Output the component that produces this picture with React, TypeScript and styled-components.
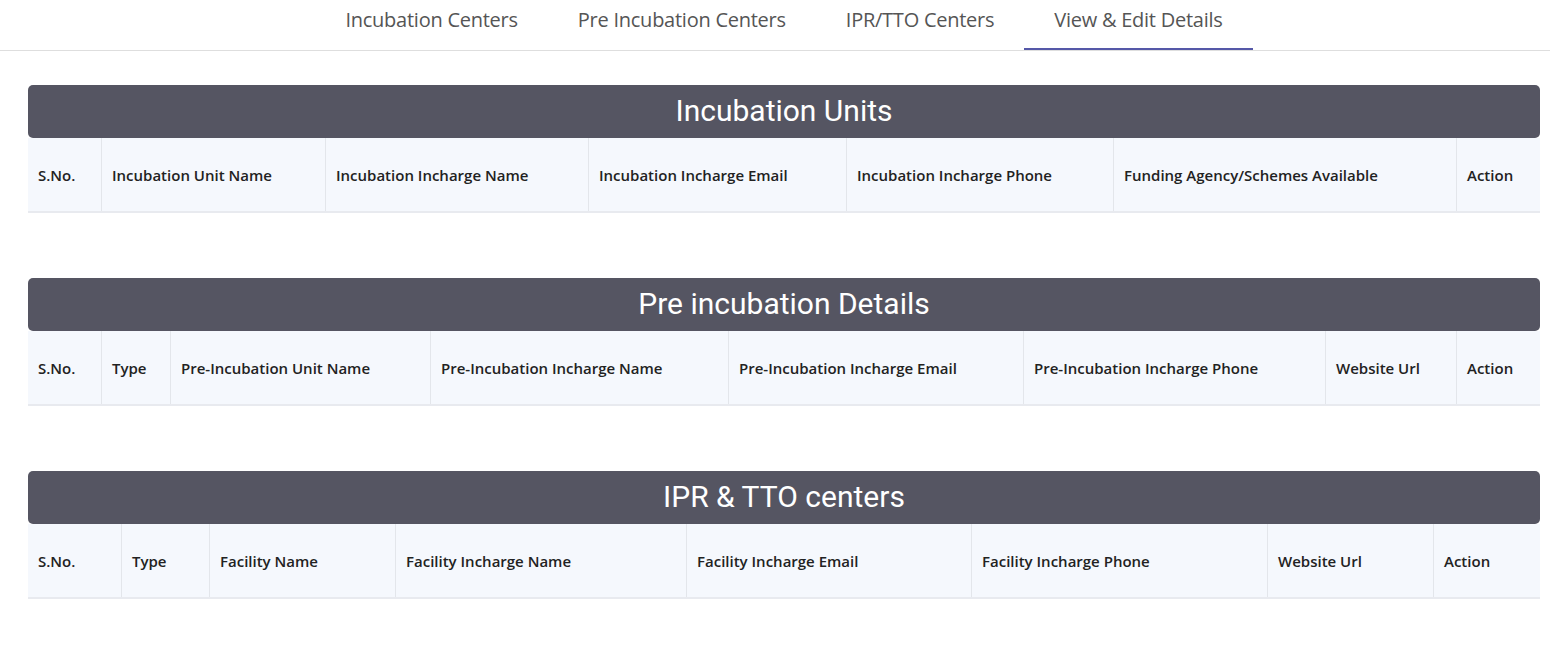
import React from "react";
import styled, { createGlobalStyle } from "styled-components";

const GlobalStyle = createGlobalStyle`
  html, body { margin: 0; padding: 0; background: #ffffff; }
  body { font-family: "Open Sans", "Noto Sans", sans-serif; }
  * { box-sizing: border-box; }
`;

const Page = styled.div`
  width: 1550px;
  min-height: 649px;
  background: #fff;
`;

const TabBar = styled.nav`
  height: 51px;
  border-bottom: 1px solid #dedede;
  display: flex;
  justify-content: center;
  padding-left: 18px;
`;

const Tab = styled.div<{ $active?: boolean }>`
  height: 50px;
  padding: 6px 30px 0;
  display: flex;
  align-items: flex-start;
  font-family: "Open Sans", sans-serif;
  font-size: 20px;
  letter-spacing: -0.25px;
  color: #555;
  border-bottom: 2px solid ${(p) => (p.$active ? "#5558a8" : "transparent")};
  margin-bottom: -1px;
  white-space: nowrap;
`;

const Content = styled.main`
  padding: 34px 10px 0 28px;
  display: flex;
  flex-direction: column;
  gap: 65px;
`;

const Section = styled.section`
  display: flex;
  flex-direction: column;
`;

const TitleBar = styled.h2`
  margin: 0;
  height: 53px;
  background: #555562;
  border-radius: 5px;
  color: #fff;
  font-family: Roboto, sans-serif;
  font-weight: 400;
  font-size: 30px;
  padding-bottom: 2px;
  display: flex;
  align-items: center;
  justify-content: center;
`;

const HeadRow = styled.div<{ $cols: string }>`
  display: grid;
  grid-template-columns: ${(p) => p.$cols};
  height: 75px;
  background: #f5f8fd;
  border-bottom: 2px solid #e8eaef;
`;

const HeadCell = styled.div<{ $first?: boolean }>`
  display: flex;
  align-items: center;
  padding: 0 0 0 10px;
  border-left: ${(p) => (p.$first ? "none" : "1px solid #e3e6eb")};
  font-family: "Open Sans", sans-serif;
  font-weight: 600;
  font-size: 15px;
  color: #222;
  white-space: nowrap;
`;

type TableDef = { title: string; widths: number[]; headers: string[] };

const tables: TableDef[] = [
  {
    title: "Incubation Units",
    widths: [73, 224, 263, 258, 267, 343, 84],
    headers: [
      "S.No.",
      "Incubation Unit Name",
      "Incubation Incharge Name",
      "Incubation Incharge Email",
      "Incubation Incharge Phone",
      "Funding Agency/Schemes Available",
      "Action",
    ],
  },
  {
    title: "Pre incubation Details",
    widths: [73, 69, 260, 298, 295, 302, 131, 84],
    headers: [
      "S.No.",
      "Type",
      "Pre-Incubation Unit Name",
      "Pre-Incubation Incharge Name",
      "Pre-Incubation Incharge Email",
      "Pre-Incubation Incharge Phone",
      "Website Url",
      "Action",
    ],
  },
  {
    title: "IPR & TTO centers",
    widths: [93, 88, 186, 291, 285, 296, 166, 107],
    headers: [
      "S.No.",
      "Type",
      "Facility Name",
      "Facility Incharge Name",
      "Facility Incharge Email",
      "Facility Incharge Phone",
      "Website Url",
      "Action",
    ],
  },
];

const tabs = ["Incubation Centers", "Pre Incubation Centers", "IPR/TTO Centers", "View & Edit Details"];

export default function App() {
  return (
    <Page>
      <GlobalStyle />
      <TabBar>
        {tabs.map((t, i) => (
          <Tab key={t} $active={i === 3}>
            {t}
          </Tab>
        ))}
      </TabBar>
      <Content>
        {tables.map((t) => (
          <Section key={t.title}>
            <TitleBar>{t.title}</TitleBar>
            <HeadRow $cols={t.widths.map((w) => `${w}px`).join(" ")}>
              {t.headers.map((h, i) => (
                <HeadCell key={h} $first={i === 0}>
                  {h}
                </HeadCell>
              ))}
            </HeadRow>
          </Section>
        ))}
      </Content>
    </Page>
  );
}
